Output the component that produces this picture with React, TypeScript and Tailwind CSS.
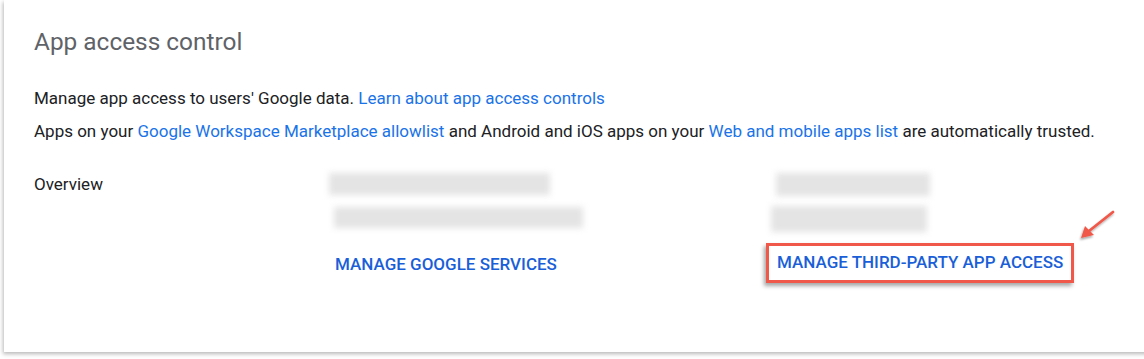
export default function App() {
  return (
    <div className="h-[359px] w-[1144px] overflow-hidden bg-white pl-1 font-['Roboto',_'Liberation_Sans',_sans-serif]">
      <div className="relative h-[352px] w-[1160px] bg-white shadow-[-1px_2px_4px_rgba(0,0,0,0.28)]">
        <div className="px-[30px] pt-[28px]">
          <h1 className="text-[24.4px] leading-[28px] text-[#5f6368]">App access control</h1>

          <p className="mt-[32px] text-[17px] leading-[20px] text-[#202124]">
            Manage app access to users' Google data.{" "}
            <a className="text-[#1a73e8]">Learn about app access controls</a>
          </p>
          <p className="mt-[13px] text-[17px] leading-[20px] text-[#202124]">
            Apps on your <a className="text-[#1a73e8]">Google Workspace Marketplace allowlist</a> and Android and iOS apps
            on your <a className="text-[#1a73e8]">Web and mobile apps list</a> are automatically trusted.
          </p>

          <div className="mt-[32px] flex">
            <div className="w-[295px] pt-[1px] text-[17px] leading-[20px] text-[#202124]">Overview</div>

            <div className="w-[442px]">
              <div className="h-[22px] w-[221px] bg-[#e4e4e4] blur-[3px]" />
              <div className="ml-[5px] mt-[12px] h-[21px] w-[249px] bg-[#e4e4e4] blur-[3px]" />
              <div className="ml-[6px] mt-[26px] text-[17px] leading-[20px] font-medium text-[#1a5fd8]">
                MANAGE GOOGLE SERVICES
              </div>
            </div>

            <div>
              <div className="ml-[5px] h-[23px] w-[154px] bg-[#e4e4e4] blur-[3px]" />
              <div className="mt-[10px] h-[26px] w-[156px] bg-[#e4e4e4] blur-[3px]" />
              <div className="-ml-[5px] mt-[11px] inline-block border-[3px] border-[#f0584a] px-[8px] py-[5px] shadow-[-2px_3px_4px_rgba(0,0,0,0.35)]">
                <span className="text-[17px] leading-[20px] font-medium text-[#1a5fd8]">
                  MANAGE THIRD-PARTY APP ACCESS
                </span>
              </div>
            </div>
          </div>
        </div>

        <svg className="absolute left-[1068px] top-[206px]" width="48" height="38" viewBox="0 0 48 38">
          <defs>
            <filter id="sh" x="-30%" y="-30%" width="160%" height="160%">
              <feDropShadow dx="-1" dy="2" stdDeviation="1.2" floodColor="#000" floodOpacity="0.35" />
            </filter>
          </defs>
          <g filter="url(#sh)">
            <line x1="41" y1="6" x2="17" y2="25" stroke="#f0584a" strokeWidth="2.8" strokeLinecap="round" />
            <polygon points="9,32 13,20 22,29" fill="#f0584a" />
          </g>
        </svg>
      </div>
    </div>
  );
}
